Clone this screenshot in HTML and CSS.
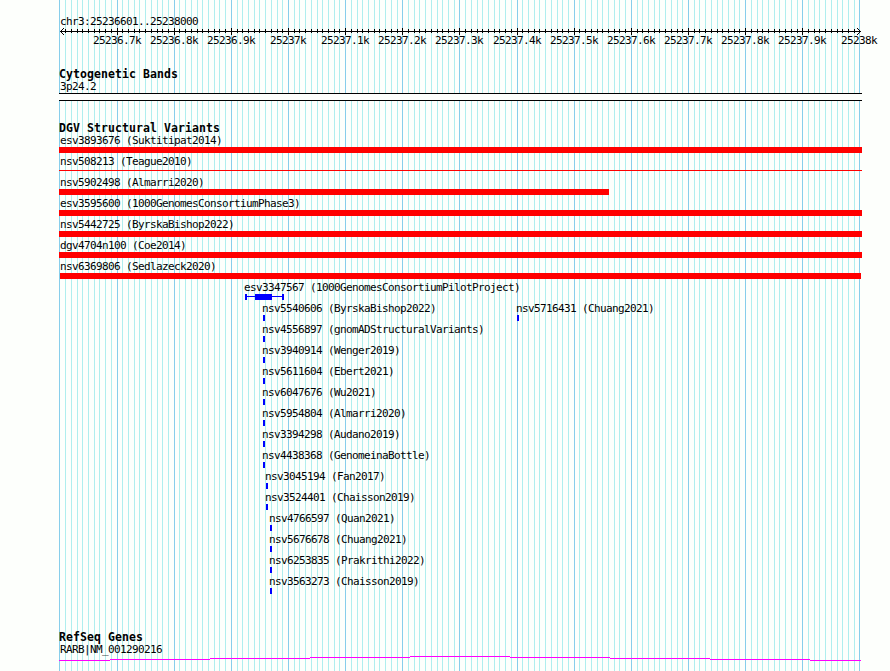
FILE: index.html
```
<!DOCTYPE html>
<html>

<head>
    <meta charset="utf-8">
    <title>Genome Browser</title>
    <link rel="stylesheet" href="styles.css">
</head>

<body>
    <div class="browser">
        <svg class="grid" id="grid" width="890" height="671"></svg>

        <div class="ruler">
            <div class="label">chr3:25236601..25238000</div>
            <svg class="scale" id="scale" width="890" height="8"></svg>
            <div class="scale-labels" id="scaleLabels"></div>
        </div>

        <div class="track cytobands">
            <div class="track-title">Cytogenetic Bands</div>
            <div class="label">3p24.2</div>
            <div class="band"></div>
        </div>

        <div class="track variants">
            <div class="track-title">DGV Structural Variants</div>
            <div id="variants"></div>
        </div>

        <div class="track genes">
            <div class="track-title">RefSeq Genes</div>
            <div class="label">RARB|NM_001290216</div>
            <svg class="gene" width="890" height="6">
                <path d="M59 4.5H110M110 3.5H210M210 2.5H310M310 1.5H410M410 .5H510M510 1.5H610M610 2.5H710M710 3.5H810M810 4.5H861" />
            </svg>
        </div>
    </div>

    <script src="script.js"></script>
</body>

</html>
```
FILE: styles.css
```
body {
    margin: 0;
    background-color: #fdfffc;
    color: #000;
    font-family: "DejaVu Sans Mono", "Liberation Mono", monospace;
    font-size: 11px;
    overflow: hidden;
}

svg {
    display: block;
    shape-rendering: crispEdges;
}

.browser {
    position: relative;
    width: 890px;
    height: 671px;
    overflow: hidden;
}

/* grid lines run behind every track */
.grid {
    position: absolute;
    top: 0;
    left: 0;
    z-index: -1;
}

.grid .minor {
    fill: #afeeee;
}

.grid .major {
    fill: #87ceeb;
}

.label {
    height: 12px;
    line-height: 13px;
    padding-left: 60px;
    letter-spacing: -0.622px;
    white-space: pre;
}

.ruler {
    padding-top: 15px;
    height: 53px;
}

.scale {
    margin-top: 1px;
}

.scale path {
    fill: none;
    stroke: #000;
}

.scale-labels {
    position: relative;
    height: 12px;
}

.scale-label {
    position: absolute;
    top: -1px;
    line-height: 12px;
    letter-spacing: -0.622px;
}

.track-title {
    height: 12px;
    line-height: 12px;
    padding-left: 59px;
    font-size: 11.5px;
    font-weight: bold;
    letter-spacing: 0.077px;
    white-space: pre;
}

.cytobands {
    height: 54px;
}

.band {
    width: 803px;
    height: 6px;
    margin: 1px 0 0 59px;
    border-top: 1px solid #000;
    border-bottom: 1px solid #000;
    background-color: #fdfffc;
}

.variants {
    height: 509px;
}

.variant-row {
    display: grid;
    height: 21px;
}

.variant {
    grid-area: 1 / 1;
}

.glyph {
    height: 6px;
    margin-top: 1px;
}

.loss {
    background-color: #f00;
}

.line {
    height: 1px;
    margin-top: 3px;
}

.gain {
    background-color: #00f;
}

.range {
    display: flex;
    align-items: center;
    border: solid #00f;
    border-width: 0 2px;
    box-sizing: border-box;
    background: linear-gradient(#00f, #00f) 0 2px / 100% 1px no-repeat;
}

.range-core {
    width: 17px;
    height: 6px;
    margin-left: 8px;
    background-color: #00f;
}

.gene {
    margin-top: 1px;
}

.gene path {
    fill: none;
    stroke: #f0f;
}
```
FILE: script.js
```
const grid = document.getElementById('grid');
const scale = document.getElementById('scale');
const scaleLabels = document.getElementById('scaleLabels');
const variants = document.getElementById('variants');

// one step is 10 bp
function stepX(i) {
    return Math.round(59.43 + i * 40 / 7);
}

let lines = '';
let ticks = 'M60 3.5H861M61 2.5H62M62 1.5H63M63 .5H64M61 4.5H62M62 5.5H63M63 6.5H64M859 2.5H860M858 1.5H859M857 .5H858M859 4.5H860M858 5.5H859M857 6.5H858';
for (let i = 0; i <= 140; i++) {
    const x = stepX(i);
    const major = i % 10 === 0;
    lines += `<rect class="${major ? 'major' : 'minor'}" x="${x}" y="0" width="1" height="671"/>`;
    if (i > 0 && i < 140) {
        ticks += major ? `M${x + 0.5} 0V7` : `M${x + 0.5} 1V5`;
    }
}
grid.innerHTML = lines;
scale.innerHTML = `<path d="${ticks}"/>`;

for (let i = 1; i <= 14; i++) {
    const text = (252366 + i) / 10 + 'k';
    const x = stepX(i * 10) - text.length * 3;
    scaleLabels.innerHTML += `<span class="scale-label" style="left: ${x}px">${text}</span>`;
}

// [name, label x, glyph type, glyph x, glyph width]
const rows = [
    [['esv3893676 (Suktitipat2014)', 60, 'loss', 59, 803]],
    [['nsv508213 (Teague2010)', 60, 'loss line', 59, 803]],
    [['nsv5902498 (Almarri2020)', 60, 'loss', 59, 550]],
    [['esv3595600 (1000GenomesConsortiumPhase3)', 60, 'loss', 59, 803]],
    [['nsv5442725 (ByrskaBishop2022)', 60, 'loss', 59, 803]],
    [['dgv4704n100 (Coe2014)', 60, 'loss', 59, 803]],
    [['nsv6369806 (Sedlazeck2020)', 60, 'loss', 60, 801]],
    [['esv3347567 (1000GenomesConsortiumPilotProject)', 244, 'range', 245, 39]],
    [['nsv5540606 (ByrskaBishop2022)', 262, 'gain', 263, 2], ['nsv5716431 (Chuang2021)', 516, 'gain', 517, 2]],
    [['nsv4556897 (gnomADStructuralVariants)', 262, 'gain', 263, 2]],
    [['nsv3940914 (Wenger2019)', 262, 'gain', 263, 2]],
    [['nsv5611604 (Ebert2021)', 262, 'gain', 263, 2]],
    [['nsv6047676 (Wu2021)', 262, 'gain', 263, 2]],
    [['nsv5954804 (Almarri2020)', 262, 'gain', 263, 2]],
    [['nsv3394298 (Audano2019)', 262, 'gain', 263, 2]],
    [['nsv4438368 (GenomeinaBottle)', 262, 'gain', 263, 2]],
    [['nsv3045194 (Fan2017)', 265, 'gain', 266, 2]],
    [['nsv3524401 (Chaisson2019)', 265, 'gain', 266, 2]],
    [['nsv4766597 (Quan2021)', 269, 'gain', 270, 2]],
    [['nsv5676678 (Chuang2021)', 269, 'gain', 270, 2]],
    [['nsv6253835 (Prakrithi2022)', 269, 'gain', 270, 2]],
    [['nsv3563273 (Chaisson2019)', 269, 'gain', 270, 2]]
];

variants.innerHTML = rows.map(row => `<div class="variant-row">${row.map(([name, labelX, type, x, width]) => `
    <div class="variant">
        <div class="label" style="padding-left: ${labelX}px">${name}</div>
        <div class="glyph ${type}" style="margin-left: ${x}px; width: ${width}px">${type === 'range' ? '<div class="range-core"></div>' : ''}</div>
    </div>`).join('')}</div>`).join('');
```
